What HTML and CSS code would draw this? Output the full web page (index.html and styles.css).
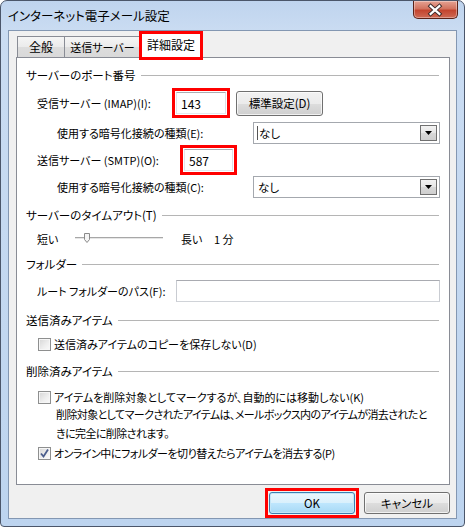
FILE: index.html
```html
<!DOCTYPE html>
<html lang="ja">
<head>
<meta charset="utf-8">
<title>インターネット電子メール設定</title>
<link rel="stylesheet" href="styles.css">
</head>
<body>
<div class="window">
  <div class="titlebar">
    <span class="title">インターネット電子メール設定</span>
    <div class="close">
      <svg width="45" height="18" viewBox="0 0 45 18">
        <path d="M18 5 L27 13 M27 5 L18 13" stroke="#3a2a2a" stroke-width="4.2" stroke-linecap="square" fill="none"/>
        <path d="M18 5 L27 13 M27 5 L18 13" stroke="#ffffff" stroke-width="2.2" stroke-linecap="square" fill="none"/>
      </svg>
    </div>
  </div>
  <div class="client">
    <div class="tabs">
      <div class="tab t1">全般</div>
      <div class="tab t2">送信サーバー</div>
      <div class="tab t3 active hl-tab">詳細設定</div>
    </div>
    <div class="panel">
      <div class="ghead"><span>サーバーのポート番号</span></div>
      <div class="row r-imap">
        <span class="lbl w-139">受信サーバー (IMAP)(I):</span>
        <div class="field port1 hl">143</div>
        <button class="btn std">標準設定(D)</button>
      </div>
      <div class="row r-encE">
        <span class="lbl w-196">使用する暗号化接続の種類(E):</span>
        <div class="combo"><span class="caret"></span><span class="val">なし</span><span class="drop"><svg width="7" height="4" viewBox="0 0 7 4"><path d="M0 0 H7 L3.5 4 Z" fill="#000"/></svg></span></div>
      </div>
      <div class="row r-smtp">
        <span class="lbl w-147">送信サーバー (SMTP)(O):</span>
        <div class="field port2 hl">587</div>
      </div>
      <div class="row r-encC">
        <span class="lbl w-196">使用する暗号化接続の種類(C):</span>
        <div class="combo"><span class="val">なし</span><span class="drop"><svg width="7" height="4" viewBox="0 0 7 4"><path d="M0 0 H7 L3.5 4 Z" fill="#000"/></svg></span></div>
      </div>
      <div class="ghead g-timeout"><span>サーバーのタイムアウト(T)</span></div>
      <div class="row r-slider">
        <span class="lbl w-38">短い</span>
        <svg class="slider" width="88" height="14" viewBox="0 0 88 14">
          <rect x="0" y="5" width="88" height="1" fill="#a7a7a7"/>
          <rect x="0" y="6" width="88" height="1" fill="#e6e6e6"/>
          <path d="M9.5 1.5 H14.5 V7.5 L12 10.5 L9.5 7.5 Z" fill="#f4f4f4" stroke="#8a8a8a" stroke-width="1"/>
        </svg>
        <span class="lbl long">長い</span>
        <span class="lbl">1 分</span>
      </div>
      <div class="ghead g-folder"><span>フォルダー</span></div>
      <div class="row r-root">
        <span class="lbl w-139">ルート フォルダーのパス(F):</span>
        <div class="field path"></div>
      </div>
      <div class="ghead g-sent"><span>送信済みアイテム</span></div>
      <div class="row cbrow r-cbD">
        <span class="cb"></span>
        <span class="lbl">送信済みアイテムのコピーを保存しない(D)</span>
      </div>
      <div class="ghead g-del"><span>削除済みアイテム</span></div>
      <div class="row cbrow r-cbK">
        <span class="cb"></span>
        <span class="lbl">アイテムを削除対象としてマークするが、自動的には移動しない(K)</span>
      </div>
      <p class="desc">削除対象としてマークされたアイテムは、メールボックス内のアイテムが消去されたと<br>きに完全に削除されます。</p>
      <div class="row cbrow r-cbP">
        <span class="cb checked"><svg width="11" height="11" viewBox="0 0 11 11"><path d="M2 5.5 L4.5 8.5 L9 1.5" stroke="#4a5d8c" stroke-width="1.8" fill="none"/></svg></span>
        <span class="lbl tight">オンライン中にフォルダーを切り替えたらアイテムを消去する(P)</span>
      </div>
    </div>
    <div class="buttons">
      <span class="hl-box"><button class="btn dlg default">OK</button></span>
      <button class="btn dlg">キャンセル</button>
    </div>
  </div>
</div>
</body>
</html>
```
FILE: styles.css
```css
* { box-sizing: border-box; }
html, body { margin: 0; padding: 0; }
body {
  width: 465px;
  height: 527px;
  overflow: hidden;
  background: #fff;
  font-family: "Noto Sans CJK JP", "Noto Sans", sans-serif;
  font-size: 11px;
  color: #000;
  font-feature-settings: "palt";
}

.window {
  width: 465px;
  height: 527px;
  border: 1px solid #4b566a;
  border-radius: 7px 7px 4px 4px;
  background: linear-gradient(to bottom, #bfd4ee 0, #cadcf2 30px, #bdd4ef 100%);
  display: flex;
  flex-direction: column;
  overflow: hidden;
}

.titlebar {
  height: 29px;
  flex: none;
  display: flex;
  align-items: flex-start;
  padding-left: 7px;
}
.title {
  line-height: 29px;
  font-size: 12.5px;
  color: #000;
}
.close {
  margin-left: auto;
  margin-right: 6px;
  width: 45px;
  height: 18px;
  border: 1px solid #5a2218;
  border-top: none;
  border-radius: 0 0 5px 5px;
  background: linear-gradient(to bottom, #e5a293 0, #d2735f 45%, #c3452f 55%, #cf6a55 100%);
  box-shadow: inset 0 0 0 1px rgba(255,255,255,0.35);
  display: flex;
}
.close svg { display: block; margin-left: -1px; }

.client {
  flex: 1;
  margin: 0 7px 7px 7px;
  border: 1px solid #8397b2;
  background: #f0f0f0;
  padding: 2px 0 0 7px;
}

.tabs {
  display: flex;
  align-items: flex-end;
  height: 24px;
  padding-left: 1px;
  position: relative;
  z-index: 1;
}
.tab {
  height: 21px;
  border: 1px solid #898c95;
  border-bottom: none;
  background: linear-gradient(to bottom, #f5f5f5 0, #ebebeb 50%, #dddddd 51%, #d9d9d9 100%);
  display: flex;
  align-items: center;
  justify-content: center;
  padding-bottom: 1px;
  font-size: 12px;
}
.t1 { width: 48px; }
.t2 { width: 77px; margin-left: -1px; font-size: 11px; }
.t3 { width: 60px; margin-left: 0; }
.tab.active {
  height: 25px;
  margin-bottom: -1px;
  background: #fff;
  padding-bottom: 3px;
}
.hl-tab {
  outline: 3px solid #ff0000;
  outline-offset: -1px;
}

.panel {
  width: 434px;
  height: 428px;
  border: 1px solid #898c95;
  background: #fff;
  padding-top: 8px;
  display: flex;
  flex-direction: column;
}

.ghead {
  height: 18px;
  flex: none;
  display: flex;
  align-items: center;
  padding: 0 10px 0 9px;
  white-space: nowrap;
  font-size: 11.5px;
}
.ghead::after {
  content: "";
  flex: 1;
  height: 1px;
  background: #b5b5b5;
  margin-left: 5px;
  margin-top: 1px;
}

.row {
  display: flex;
  align-items: center;
  flex: none;
  white-space: nowrap;
  padding-left: 20px;
}
.lbl { white-space: nowrap; }
.tight { letter-spacing: -0.5px; }
.w-139 { width: 139px; }
.w-147 { width: 147px; }
.w-196 { width: 196px; }
.w-38 { width: 38px; }

.r-imap { margin-top: 8px; height: 22px; }
.r-encE { margin-top: 8px; height: 22px; padding-left: 40px; }
.r-smtp { margin-top: 5px; height: 22px; }
.r-encC { margin-top: 5px; height: 22px; padding-left: 40px; }
.g-timeout { margin-top: 8px; }
.r-slider { margin-top: 6px; height: 18px; }
.g-folder { margin-top: 7px; }
.r-root { margin-top: 7px; height: 22px; }
.g-sent { margin-top: 9px; }
.r-cbD { margin-top: 6px; height: 18px; }
.g-del { margin-top: 9px; }
.r-cbK { margin-top: 9px; height: 16px; }
.r-cbP { margin-top: 2px; height: 16px; }

.field {
  height: 22px;
  border: 1px solid;
  border-color: #abadb3 #dbdfe6 #e3e9ef #e2e3ea;
  background: #fff;
  padding-left: 4px;
  display: flex;
  align-items: center;
  font-size: 12px;
}
.port1 { width: 50px; }
.port2 { width: 49px; }
.path { width: 264px; border-color: #a9abb1 #c9ccd2 #d0d3d8 #c9ccd2; }
.hl {
  outline: 3px solid #ff0000;
  outline-offset: 1px;
}
.hl-box {
  display: flex;
  outline: 3px solid #ff0000;
  outline-offset: 1px;
}

.combo {
  width: 187px;
  height: 22px;
  border: 1px solid #a4a8ae;
  background: #fff;
  display: flex;
  align-items: center;
  padding-left: 3px;
  position: relative;
}
.combo .caret {
  width: 1px;
  height: 14px;
  background: #555;
}
.combo .val { margin-left: 1px; font-size: 11.5px; }
.combo .drop {
  margin-left: auto;
  margin-right: 2px;
  width: 17px;
  height: 16px;
  border: 1px solid #707070;
  background: linear-gradient(to bottom, #f2f2f2 0, #e6e6e6 50%, #d8d8d8 51%, #cfcfcf 100%);
  display: flex;
  align-items: center;
  justify-content: center;
}
.combo .drop svg { display: block; }

.btn {
  font: inherit;
  font-feature-settings: "palt";
  font-size: 11.5px;
  color: #000;
  border: 1px solid #707070;
  border-radius: 3px;
  background: linear-gradient(to bottom, #f2f2f2 0, #ebebeb 50%, #dddddd 51%, #cfcfcf 100%);
  box-shadow: inset 0 0 0 1px rgba(255,255,255,0.7);
  padding: 0;
  display: flex;
  align-items: center;
  justify-content: center;
}
.std {
  width: 87px;
  height: 25px;
  margin-left: 10px;
}

.slider { display: block; flex: none; }
.long { margin-left: 18px; width: 33px; }

.cb {
  width: 13px;
  height: 13px;
  flex: none;
  border: 1px solid #8e8f8f;
  background: linear-gradient(135deg, #d6d6d6 0, #efefef 60%, #fafafa 100%);
  box-shadow: inset 0 0 0 1px #f6f6f6;
  margin-left: 1px;
  margin-right: 3px;
  display: flex;
  align-items: center;
  justify-content: center;
}
.cb svg { display: block; }

.desc {
  margin: 0;
  padding-left: 39px;
  line-height: 19px;
  white-space: nowrap;
  letter-spacing: -0.6px;
}

.buttons {
  width: 434px;
  margin-top: 7px;
  display: flex;
  justify-content: flex-end;
  gap: 9px;
}
.dlg {
  width: 86px;
  height: 22px;
}
.default {
  border-color: #3c7fb1;
  background: linear-gradient(to bottom, #eaf6fd 0, #d9f0fc 50%, #bee6fd 51%, #a7d9f5 100%);
  box-shadow: inset 0 0 0 1px #c4e6f7;
}
```
